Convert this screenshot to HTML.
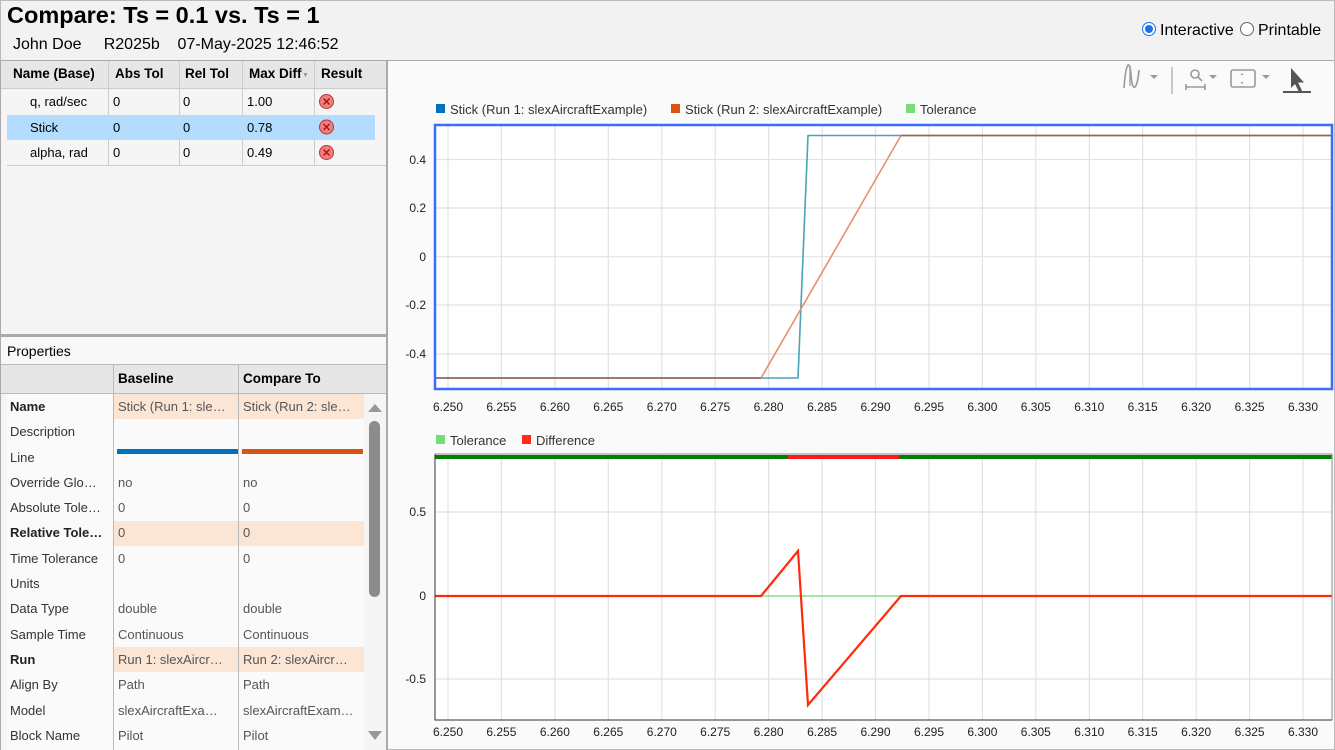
<!DOCTYPE html>
<html><head><meta charset="utf-8"><style>
*{margin:0;padding:0;box-sizing:border-box}
body{width:1335px;height:750px;overflow:hidden;background:#f5f5f5;font-family:"Liberation Sans",Arial,sans-serif;position:relative;font-size:13px;color:#000}
.a{position:absolute;white-space:nowrap}
.th{font-weight:bold;font-size:13.5px}
.g{color:#333}
</style></head><body>
<!-- header -->
<div class="a" style="left:0;top:0;width:1335px;height:61px;background:#f2f2f2;border:1px solid #bbb;border-bottom:1px solid #aaa"></div>
<div class="a" style="left:7px;top:2px;font-size:23.5px;font-weight:bold">Compare: Ts = 0.1 vs. Ts = 1</div>
<div class="a" style="left:13px;top:36px;font-size:16px">John Doe&nbsp;&nbsp;&nbsp;&nbsp;&nbsp;R2025b&nbsp;&nbsp;&nbsp;&nbsp;07-May-2025 12:46:52</div>
<div class="a" style="left:1142px;top:22px;width:14px;height:14px;border-radius:50%;border:1px solid #1a73e8;background:#fff"><div style="margin:2px;width:8px;height:8px;border-radius:50%;background:#1a73e8"></div></div>
<div class="a" style="left:1160px;top:22px;font-size:16px">Interactive</div>
<div class="a" style="left:1240px;top:22px;width:14px;height:14px;border-radius:50%;border:1px solid #666;background:#fff"></div>
<div class="a" style="left:1258px;top:22px;font-size:16px">Printable</div>

<!-- left panel -->
<div class="a" style="left:0;top:61px;width:388px;height:689px;background:#f5f5f5;border-left:1px solid #aaa;border-right:2px solid #aaa"></div>
<div class="a" style="left:1px;top:61px;width:385px;height:28px;background:#e6e6e6;border-bottom:1px solid #ccc"></div>
<div class="a" style="left:108px;top:61px;width:1px;height:104px;background:#ccc"></div>
<div class="a" style="left:179px;top:61px;width:1px;height:104px;background:#ccc"></div>
<div class="a" style="left:242px;top:61px;width:1px;height:104px;background:#ccc"></div>
<div class="a" style="left:314px;top:61px;width:1px;height:104px;background:#ccc"></div>
<div class="a" style="left:7px;top:165px;width:379px;height:1px;background:#ccc"></div>
<div class="a th" style="left:13px;top:66px">Name (Base)</div>
<div class="a th" style="left:115px;top:66px">Abs Tol</div>
<div class="a th" style="left:185px;top:66px">Rel Tol</div>
<div class="a th" style="left:249px;top:66px">Max Diff</div>
<div class="a" style="left:302px;top:72px;font-size:7px;color:#999">▼</div>
<div class="a th" style="left:321px;top:66px">Result</div>
<div class="a" style="left:7px;top:115px;width:368px;height:25px;background:#b3dcfe"></div>
<div class="a" style="left:30px;top:94px">q, rad/sec</div><div class="a" style="left:113px;top:94px">0</div><div class="a" style="left:183px;top:94px">0</div><div class="a" style="left:247px;top:94px">1.00</div>
<div class="a" style="left:30px;top:120px">Stick</div><div class="a" style="left:113px;top:120px">0</div><div class="a" style="left:183px;top:120px">0</div><div class="a" style="left:247px;top:120px">0.78</div>
<div class="a" style="left:30px;top:145px">alpha, rad</div><div class="a" style="left:113px;top:145px">0</div><div class="a" style="left:183px;top:145px">0</div><div class="a" style="left:247px;top:145px">0.49</div>
<svg class="a" style="left:318px;top:93px" width="18" height="70"><g fill="#f08080" stroke="#c03030" stroke-width="1"><circle cx="8.5" cy="8.5" r="7"/><circle cx="8.5" cy="34" r="7"/><circle cx="8.5" cy="59.5" r="7"/></g><g stroke="#a01010" stroke-width="1.3"><path d="M5.5 5.5l6 6M11.5 5.5l-6 6M5.5 31l6 6M11.5 31l-6 6M5.5 56.5l6 6M11.5 56.5l-6 6"/></g></svg>

<div class="a" style="left:1px;top:334px;width:385px;height:3px;background:#aaa"></div>
<div class="a" style="left:1px;top:337px;width:385px;height:28px;background:#f8f8f8;border-bottom:1px solid #bbb"></div>
<div class="a" style="left:7px;top:343px;font-size:14px">Properties</div>
<div class="a" style="left:1px;top:365px;width:385px;height:29px;background:#e6e6e6;border-bottom:1px solid #bbb"></div>
<div class="a" style="left:113px;top:365px;width:1px;height:385px;background:#bbb"></div>
<div class="a" style="left:238px;top:365px;width:1px;height:385px;background:#bbb"></div>
<div class="a th" style="left:118px;top:371px">Baseline</div>
<div class="a th" style="left:243px;top:371px">Compare To</div>
<div class="a" style="left:7px;top:394px;width:357px;height:356px;background:#fafafa"></div>
<div class="a" style="left:114px;top:394px;width:250px;height:25px;background:#fbe6d6"></div>
<div class="a" style="left:114px;top:521px;width:250px;height:25px;background:#fbe6d6"></div>
<div class="a" style="left:114px;top:647px;width:250px;height:25px;background:#fbe6d6"></div>
<div class="a" style="left:113px;top:394px;width:1px;height:356px;background:#bbb"></div>
<div class="a" style="left:238px;top:394px;width:1px;height:356px;background:#bbb"></div>
<div class="a" style="left:117px;top:449px;width:121px;height:5px;background:#0072bd"></div>
<div class="a" style="left:242px;top:449px;width:121px;height:5px;background:#d95319"></div>
<div class="a g" style="left:10px;top:394px;line-height:25.3px">
<b style="color:#222">Name</b><br>Description<br>Line<br>Override Glo…<br>Absolute Tole…<br><b style="color:#222">Relative Tole…</b><br>Time Tolerance<br>Units<br>Data Type<br>Sample Time<br><b style="color:#222">Run</b><br>Align By<br>Model<br>Block Name</div>
<div class="a" style="left:118px;top:394px;line-height:25.3px;color:#555">Stick (Run 1: sle…<br>&nbsp;<br>&nbsp;<br>no<br>0<br>0<br>0<br>&nbsp;<br>double<br>Continuous<br>Run 1: slexAircr…<br>Path<br>slexAircraftExa…<br>Pilot</div>
<div class="a" style="left:243px;top:394px;line-height:25.3px;color:#555">Stick (Run 2: sle…<br>&nbsp;<br>&nbsp;<br>no<br>0<br>0<br>0<br>&nbsp;<br>double<br>Continuous<br>Run 2: slexAircr…<br>Path<br>slexAircraftExam…<br>Pilot</div>
<svg class="a" style="left:366px;top:399px" width="18" height="346"><path d="M2 13L9 5L16 13Z" fill="#999"/><rect x="3" y="22" width="11" height="176" rx="5.5" fill="#8c8c8c"/><path d="M2 332L9 341L16 332Z" fill="#999"/></svg>

<!-- right panel -->
<div class="a" style="left:388px;top:61px;width:947px;height:689px;background:#fafafa;border-right:1px solid #bbb;border-bottom:1px solid #bbb"></div>
<svg class="a" style="left:0;top:0" width="1335" height="750" font-family="Liberation Sans, Arial, sans-serif" font-size="12">
<g stroke="#999" fill="none" stroke-width="1.6">
<path d="M1124 88 C1126 60,1130 60,1131 75 C1132 92,1137 92,1139 70"/>
<path d="M1130 66 L1130 86" stroke-width="1.2"/>
<line x1="1172" y1="67" x2="1172" y2="94" stroke="#bbb"/>
<circle cx="1195" cy="74" r="4"/><path d="M1198 77l4 4M1186 84v6M1186 87h19M1205 84v6"/>
<rect x="1231" y="70" width="24" height="17" rx="2"/>
</g>
<g fill="#999"><path d="M1150 75h8l-4 4z"/><path d="M1209 75h8l-4 4z"/><path d="M1262 75h8l-4 4z"/><path d="M1242 73l1.5 2h-3zM1242 84l1.5-2h-3z"/></g>
<path d="M1291 68l0 20 4-4 4 8 3-1.5-4-8 6 0z" fill="#555"/>
<rect x="1283" y="91" width="28" height="2" fill="#555"/>

<rect x="436" y="104" width="9" height="9" fill="#0072bd"/><text x="450" y="114" fill="#333" font-size="13">Stick (Run 1: slexAircraftExample)</text>
<rect x="671" y="104" width="9" height="9" fill="#d95319"/><text x="685" y="114" fill="#333" font-size="13">Stick (Run 2: slexAircraftExample)</text>
<rect x="906" y="104" width="9" height="9" fill="#77dd77"/><text x="920" y="114" fill="#333" font-size="13">Tolerance</text>

<rect x="435" y="125" width="897" height="264" fill="#fff"/>
<g stroke="#e2e2e2" stroke-width="1.2">
<path d="M448 125V389M501.4 125V389M554.9 125V389M608.3 125V389M661.8 125V389M715.2 125V389M768.6 125V389M822.1 125V389M875.5 125V389M929 125V389M982.4 125V389M1035.8 125V389M1089.3 125V389M1142.7 125V389M1196.2 125V389M1249.6 125V389M1303 125V389"/>
<path d="M435 159.5H1332M435 208H1332M435 256.7H1332M435 305H1332M435 354H1332"/>
</g>
<polyline points="435,378 798,378 808,135.5 1332,135.5" fill="none" stroke="#4aa3b8" stroke-width="1.6"/>
<polyline points="435,378 761,378 820,276 901,135.5 1332,135.5" fill="none" stroke="#e88f6a" stroke-width="1.6"/>
<polyline points="435,378 761,378" stroke="#8b6b5a" stroke-width="1.6"/>
<polyline points="901,135.5 1332,135.5" stroke="#8b6b5a" stroke-width="1.6"/>
<rect x="435" y="125" width="897" height="264" fill="none" stroke="#3a6bff" stroke-width="2.5"/>
<g fill="#222" text-anchor="end"><text x="426" y="164">0.4</text><text x="426" y="212">0.2</text><text x="426" y="261">0</text><text x="426" y="309">-0.2</text><text x="426" y="358">-0.4</text></g>
<g fill="#222" text-anchor="middle" font-size="12">
<text x="448" y="411">6.250</text><text x="501.4" y="411">6.255</text><text x="554.9" y="411">6.260</text><text x="608.3" y="411">6.265</text><text x="661.8" y="411">6.270</text><text x="715.2" y="411">6.275</text><text x="768.6" y="411">6.280</text><text x="822.1" y="411">6.285</text><text x="875.5" y="411">6.290</text><text x="929" y="411">6.295</text><text x="982.4" y="411">6.300</text><text x="1035.8" y="411">6.305</text><text x="1089.3" y="411">6.310</text><text x="1142.7" y="411">6.315</text><text x="1196.2" y="411">6.320</text><text x="1249.6" y="411">6.325</text><text x="1303" y="411">6.330</text>
</g>

<rect x="436" y="435" width="9" height="9" fill="#77dd77"/><text x="450" y="445" fill="#333" font-size="13">Tolerance</text>
<rect x="522" y="435" width="9" height="9" fill="#ff2a1a"/><text x="536" y="445" fill="#333" font-size="13">Difference</text>

<rect x="435" y="454" width="897" height="266" fill="#fff"/>
<g stroke="#e2e2e2" stroke-width="1.2">
<path d="M448 454V720M501.4 454V720M554.9 454V720M608.3 454V720M661.8 454V720M715.2 454V720M768.6 454V720M822.1 454V720M875.5 454V720M929 454V720M982.4 454V720M1035.8 454V720M1089.3 454V720M1142.7 454V720M1196.2 454V720M1249.6 454V720M1303 454V720"/>
<path d="M435 512H1332M435 596H1332M435 679H1332"/>
</g>
<rect x="435" y="455" width="897" height="4" fill="#008000"/>
<rect x="788" y="455" width="111" height="4" fill="#ff1a1a"/>
<line x1="761" y1="596" x2="901" y2="596" stroke="#90dc90" stroke-width="1.5"/>
<polyline points="435,596 761,596 798,551 808,705 901,596 1332,596" fill="none" stroke="#ff2a0a" stroke-width="2.2"/>
<path d="M435 454V720H1332" fill="none" stroke="#333" stroke-width="1"/>
<line x1="435" y1="454" x2="1332" y2="454" stroke="#888"/>
<line x1="1332" y1="454" x2="1332" y2="720" stroke="#888"/>
<g fill="#222" text-anchor="end"><text x="426" y="516">0.5</text><text x="426" y="600">0</text><text x="426" y="683">-0.5</text></g>
<g fill="#222" text-anchor="middle" font-size="12">
<text x="448" y="736">6.250</text><text x="501.4" y="736">6.255</text><text x="554.9" y="736">6.260</text><text x="608.3" y="736">6.265</text><text x="661.8" y="736">6.270</text><text x="715.2" y="736">6.275</text><text x="768.6" y="736">6.280</text><text x="822.1" y="736">6.285</text><text x="875.5" y="736">6.290</text><text x="929" y="736">6.295</text><text x="982.4" y="736">6.300</text><text x="1035.8" y="736">6.305</text><text x="1089.3" y="736">6.310</text><text x="1142.7" y="736">6.315</text><text x="1196.2" y="736">6.320</text><text x="1249.6" y="736">6.325</text><text x="1303" y="736">6.330</text>
</g>
</svg>
</body></html>
